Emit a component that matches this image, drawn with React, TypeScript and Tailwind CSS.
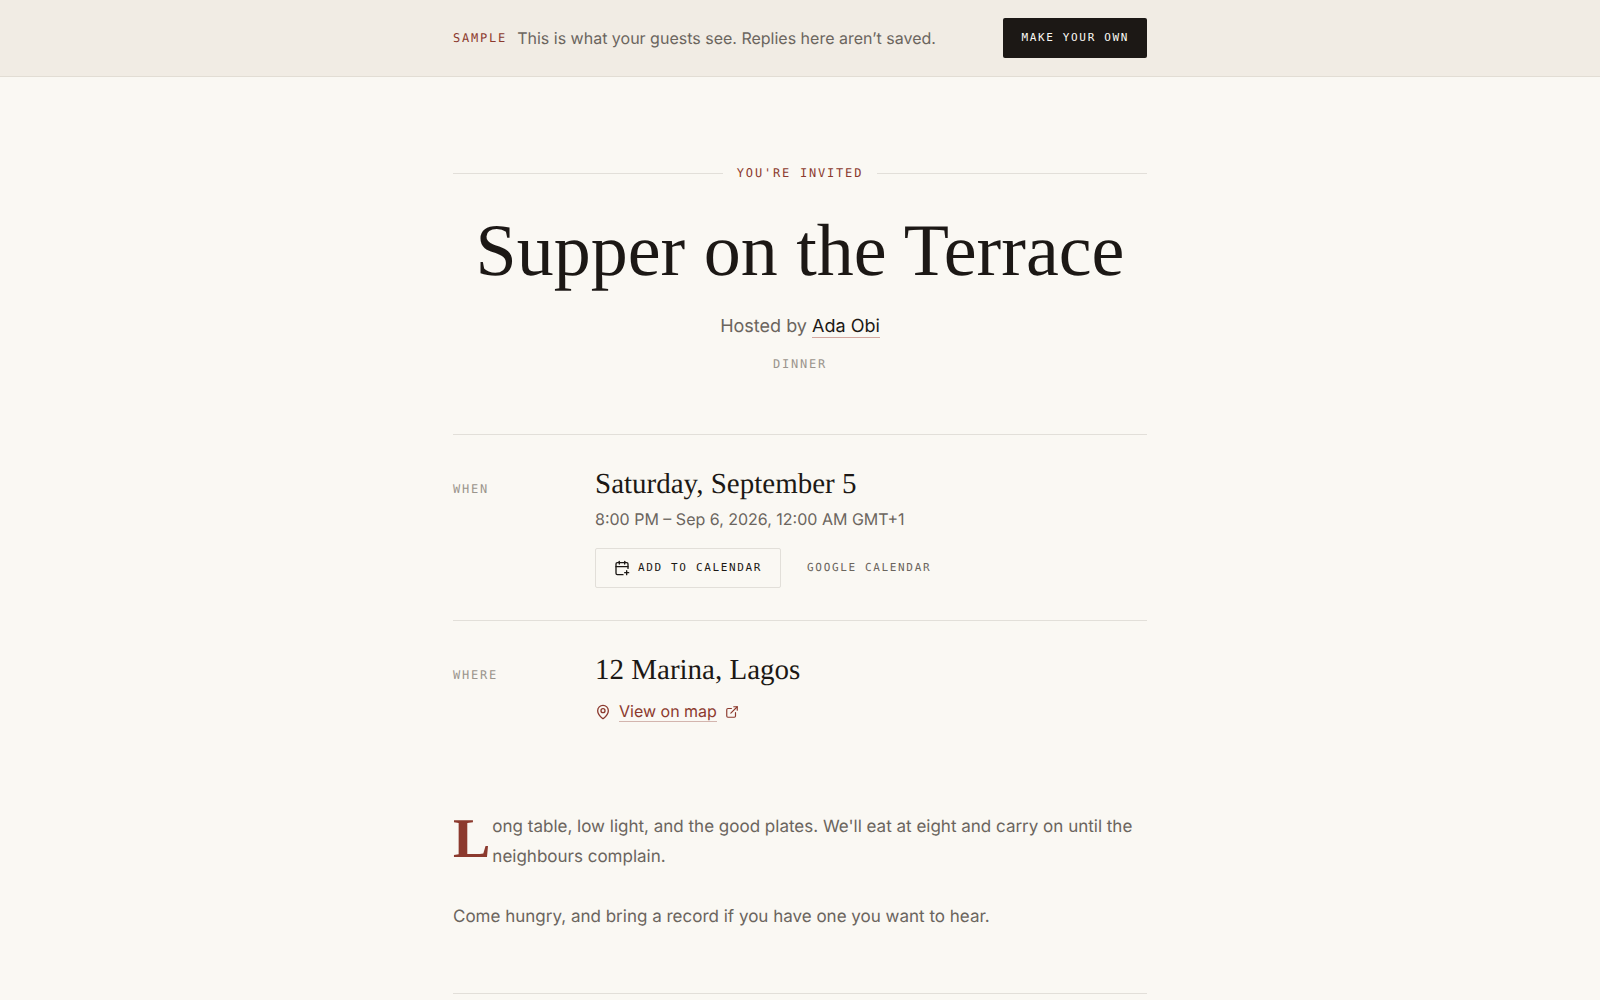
import React from 'react';
import { CalendarPlus, ExternalLink, MapPin } from 'lucide-react';
import { clsx, type ClassValue } from 'clsx';
import { twMerge } from 'tailwind-merge';

function cn(...inputs: ClassValue[]) {
  return twMerge(clsx(inputs));
}

interface LabelProps {
  children: React.ReactNode;
  className?: string;
}

const mono = "font-['DejaVu_Sans_Mono',monospace] uppercase";
const serif = "font-['Liberation_Serif',serif]";

const Label: React.FC<LabelProps> = ({ children, className }) => (
  <span className={cn(mono, 'text-[12px] leading-4 tracking-[0.15em] text-[#9b958d]', className)}>{children}</span>
);

interface DetailProps {
  label: string;
  title: string;
  children: React.ReactNode;
}

const Detail: React.FC<DetailProps> = ({ label, title, children }) => (
  <section className="grid grid-cols-[126px_1fr] gap-4 border-t border-[#e2dfd9] py-8">
    <Label className="pt-[14px]">{label}</Label>
    <div>
      <h2 className={cn(serif, 'text-[29px] leading-[34px] text-[#1c1815]')}>{title}</h2>
      {children}
    </div>
  </section>
);

export default function App() {
  return (
    <div className="min-h-screen bg-[#faf8f3] font-['Inter',sans-serif] text-[#1c1815] [text-rendering:geometricPrecision]">
      {/* Sample banner */}
      <header className="border-b border-[#e2ddd4] bg-[#f1ece4] px-6 py-[18px]">
        <div className="mx-auto flex max-w-[694px] items-center justify-between">
          <p className="flex items-center gap-[10px] text-base text-[#6b655e]">
            <Label className="text-[#8c3a2e]">Sample</Label>
            This is what your guests see. Replies here aren’t saved.
          </p>
          <button
            type="button"
            className={cn(mono, 'h-10 rounded-xs bg-[#1c1815] px-[18px] text-[11px] tracking-[0.15em] text-[#faf8f3]')}
          >
            Make your own
          </button>
        </div>
      </header>

      <main className="px-6 pt-20">
        <div className="mx-auto max-w-[694px]">
          {/* Title block */}
          <div className="pb-[62px] text-center">
            <div className="flex h-8 items-center gap-[14px]">
              <span className="h-px flex-1 bg-[#e2dfd9]" />
              <Label className="text-[#8c3a2e]">You're invited</Label>
              <span className="h-px flex-1 bg-[#e2dfd9]" />
            </div>
            <h1 className={cn(serif, 'mt-6 text-[74px] leading-[76px]')}>Supper on the Terrace</h1>
            <p className="mt-6 text-lg leading-7 text-[#6b655e]">
              Hosted by{' '}
              <a href="#host" className="border-b border-[#d3a79f] text-[#1c1815]">
                Ada Obi
              </a>
            </p>
            <p className="mt-[15px] flex justify-center">
              <Label>Dinner</Label>
            </p>
          </div>

          <Detail label="When" title="Saturday, September 5">
            <p className="mt-[6px] text-base leading-6 text-[#6b655e]">8:00 PM – Sep 6, 2026, 12:00 AM GMT+1</p>
            <div className="mt-[17px] flex items-center gap-2">
              <button
                type="button"
                className={cn(
                  mono,
                  'flex h-10 items-center gap-2 rounded-xs border border-[#e2dfd9] px-[18px] text-[11px] tracking-[0.15em]'
                )}
              >
                <CalendarPlus size={16} strokeWidth={2} />
                Add to calendar
              </button>
              <a href="#google" className={cn(mono, 'px-[18px] text-[11px] tracking-[0.15em] text-[#6b655e]')}>
                Google Calendar
              </a>
            </div>
          </Detail>

          <Detail label="Where" title="12 Marina, Lagos">
            <a href="#map" className="mt-[14px] flex items-center gap-2 text-base leading-5 text-[#8c3a2e]">
              <MapPin size={16} />
              <span className="border-b border-[#d3b5ae]">View on map</span>
              <ExternalLink size={14} />
            </a>
          </Detail>

          {/* Invitation note */}
          <div className="border-b border-[#e2dfd9] pt-[58px] pb-[61px] text-[17px] leading-[30px] text-[#6b655e]">
            <p>
              <span className={cn(serif, 'float-left mr-[2px] text-[56px] leading-[54px] font-bold text-[#8c3a2e]')}>
                L
              </span>
              ong table, low light, and the good plates. We'll eat at eight and carry on until the neighbours complain.
            </p>
            <p className="mt-[30px]">Come hungry, and bring a record if you have one you want to hear.</p>
          </div>
        </div>
      </main>
    </div>
  );
}
